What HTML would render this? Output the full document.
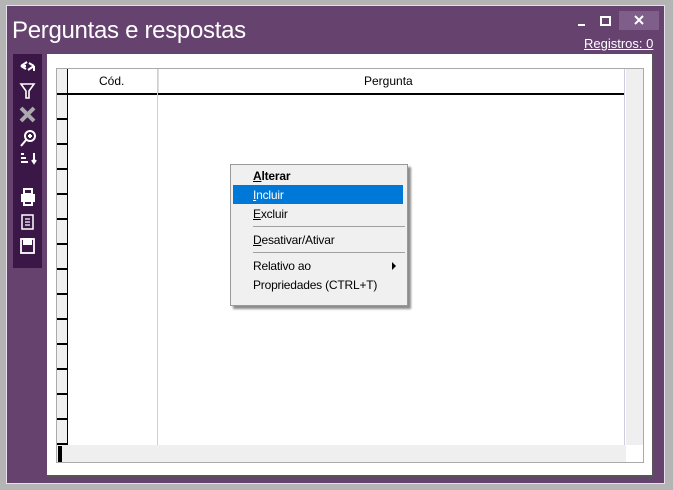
<!DOCTYPE html>
<html><head><style>
*{margin:0;padding:0;box-sizing:border-box}
body{width:673px;height:490px;background:#b4b4b4;position:relative;overflow:hidden;font-family:"Liberation Sans",sans-serif}
.a{position:absolute}
#win{left:6px;top:5px;width:659px;height:479px;background:#66426f;border:1px solid #e6e0ea}
.title{left:12px;top:17px;color:#fff;font-size:24px;font-weight:300;letter-spacing:-0.3px}
.reg{left:584px;top:36px;color:#fff;font-size:13px;text-decoration:underline}
.tb{left:13px;top:54px;width:29px;height:214px;background:#3a1747}
.panel{left:47px;top:54px;width:607px;height:423px;background:#fff;border-right:2px solid #555;border-bottom:2px solid #555}
.grid{left:56px;top:68px;width:588px;height:395px;border:1px solid #aaa;background:#fff}
.hd{font-size:12px;color:#000}
.rl{left:57px;width:10px;height:2px;background:#000}
.menu{left:230px;top:164px;width:178px;height:142px;background:#f0f0f0;border:1px solid #999;box-shadow:3px 3px 2px rgba(0,0,0,.45);font-size:12px;letter-spacing:-0.2px}
.mi{position:absolute;left:22px;color:#000}
.sep{position:absolute;left:22px;width:152px;height:1px;background:#a0a0a0}
</style></head><body>
<div id="win" class="a"></div>
<div class="a title">Perguntas e respostas</div>
<div class="a" style="left:619px;top:11px;width:40px;height:19px;background:#7f5e89"></div>
<div class="a" style="left:578px;top:24px;width:7px;height:2px;background:#fff"></div>
<div class="a" style="left:600px;top:16px;width:11px;height:10px;border:2px solid #fff"></div>
<svg class="a" style="left:634px;top:15px" width="10" height="10"><path d="M1 1 L9 9 M9 1 L1 9" stroke="#fff" stroke-width="2"/></svg>
<div class="a reg">Registros: 0</div>
<div class="a tb">
<svg width="29" height="214" viewBox="0 0 29 214" fill="none" stroke="#fff" stroke-width="2">
<path d="M8 12 L14 8 M8 12 L13 15 M8 12 H13 M21 12 L15 16 M21 12 L16 9 M21 17 V12"/>
<path d="M8 30 H21 L16 37 V44 H13 V37 Z" stroke-width="1.6"/>
<path d="M8 54 L21 67 M21 54 L8 67" stroke="#aaa" stroke-width="4"/>
<circle cx="17" cy="82" r="5"/><path d="M13 86 L8 92 M15 82 H19 M17 80 V84"/>
<path d="M8 100 H11 M8 104 H13 M8 108 H15 M21 99 V109 M19 106 L21 109 L23 106" stroke-width="2"/>
<rect x="8" y="140" width="14" height="8" fill="#fff" stroke="none"/><rect x="11" y="135" width="8" height="5"/><rect x="11" y="147" width="8" height="4"/>
<rect x="9" y="161" width="11" height="14" stroke-width="1.5"/><path d="M12 165 H17 M12 168 H17 M12 171 H17" stroke-width="1.2"/>
<rect x="8" y="185" width="13" height="14" stroke-width="1.8"/><rect x="11" y="185" width="7" height="5" fill="#fff"/>
</svg></div>
<div class="a panel"></div>
<div class="a grid"></div>
<div class="a" style="left:57px;top:69px;width:10px;height:376px;background:#f0f0f0"></div>
<div class="a" style="left:67px;top:69px;width:1px;height:376px;background:#000"></div>
<div class="a" style="left:57px;top:93px;width:568px;height:2px;background:#000"></div>
<div class="a" style="left:157px;top:69px;width:1px;height:376px;background:#d0cce0"></div>
<div class="a" style="left:158px;top:69px;width:1px;height:24px;background:#ddd"></div>
<div class="a" style="left:624px;top:69px;width:1px;height:376px;background:#d0cce0"></div>
<div class="a" style="left:626px;top:69px;width:17px;height:376px;background:#efefef"></div>
<div class="a" style="left:57px;top:445px;width:569px;height:17px;background:#efefef"></div>
<div class="a" style="left:58px;top:446px;width:4px;height:16px;background:#000"></div>
<div class="a hd" style="left:99px;top:74px">Cód.</div>
<div class="a hd" style="left:364px;top:74px">Pergunta</div>
<div class="a rl" style="top:118px"></div><div class="a rl" style="top:143px"></div><div class="a rl" style="top:168px"></div><div class="a rl" style="top:193px"></div><div class="a rl" style="top:218px"></div><div class="a rl" style="top:243px"></div><div class="a rl" style="top:268px"></div><div class="a rl" style="top:293px"></div><div class="a rl" style="top:318px"></div><div class="a rl" style="top:343px"></div><div class="a rl" style="top:368px"></div><div class="a rl" style="top:393px"></div><div class="a rl" style="top:418px"></div><div class="a rl" style="top:443px"></div>
<div class="a menu">
<div class="mi" style="top:4px;font-weight:bold"><u>A</u>lterar</div>
<div style="position:absolute;left:2px;top:20px;width:170px;height:19px;background:#0078d7"></div>
<div class="mi" style="top:23px;color:#fff"><u>I</u>ncluir</div>
<div class="mi" style="top:42px"><u>E</u>xcluir</div>
<div class="sep" style="top:61px"></div>
<div class="mi" style="top:68px"><u>D</u>esativar/Ativar</div>
<div class="sep" style="top:87px"></div>
<div class="mi" style="top:94px">Relativo ao</div>
<div style="position:absolute;left:161px;top:97px;width:0;height:0;border-left:4px solid #000;border-top:4px solid transparent;border-bottom:4px solid transparent"></div>
<div class="mi" style="top:113px">Propriedades (CTRL+T)</div>
</div>
</body></html>
